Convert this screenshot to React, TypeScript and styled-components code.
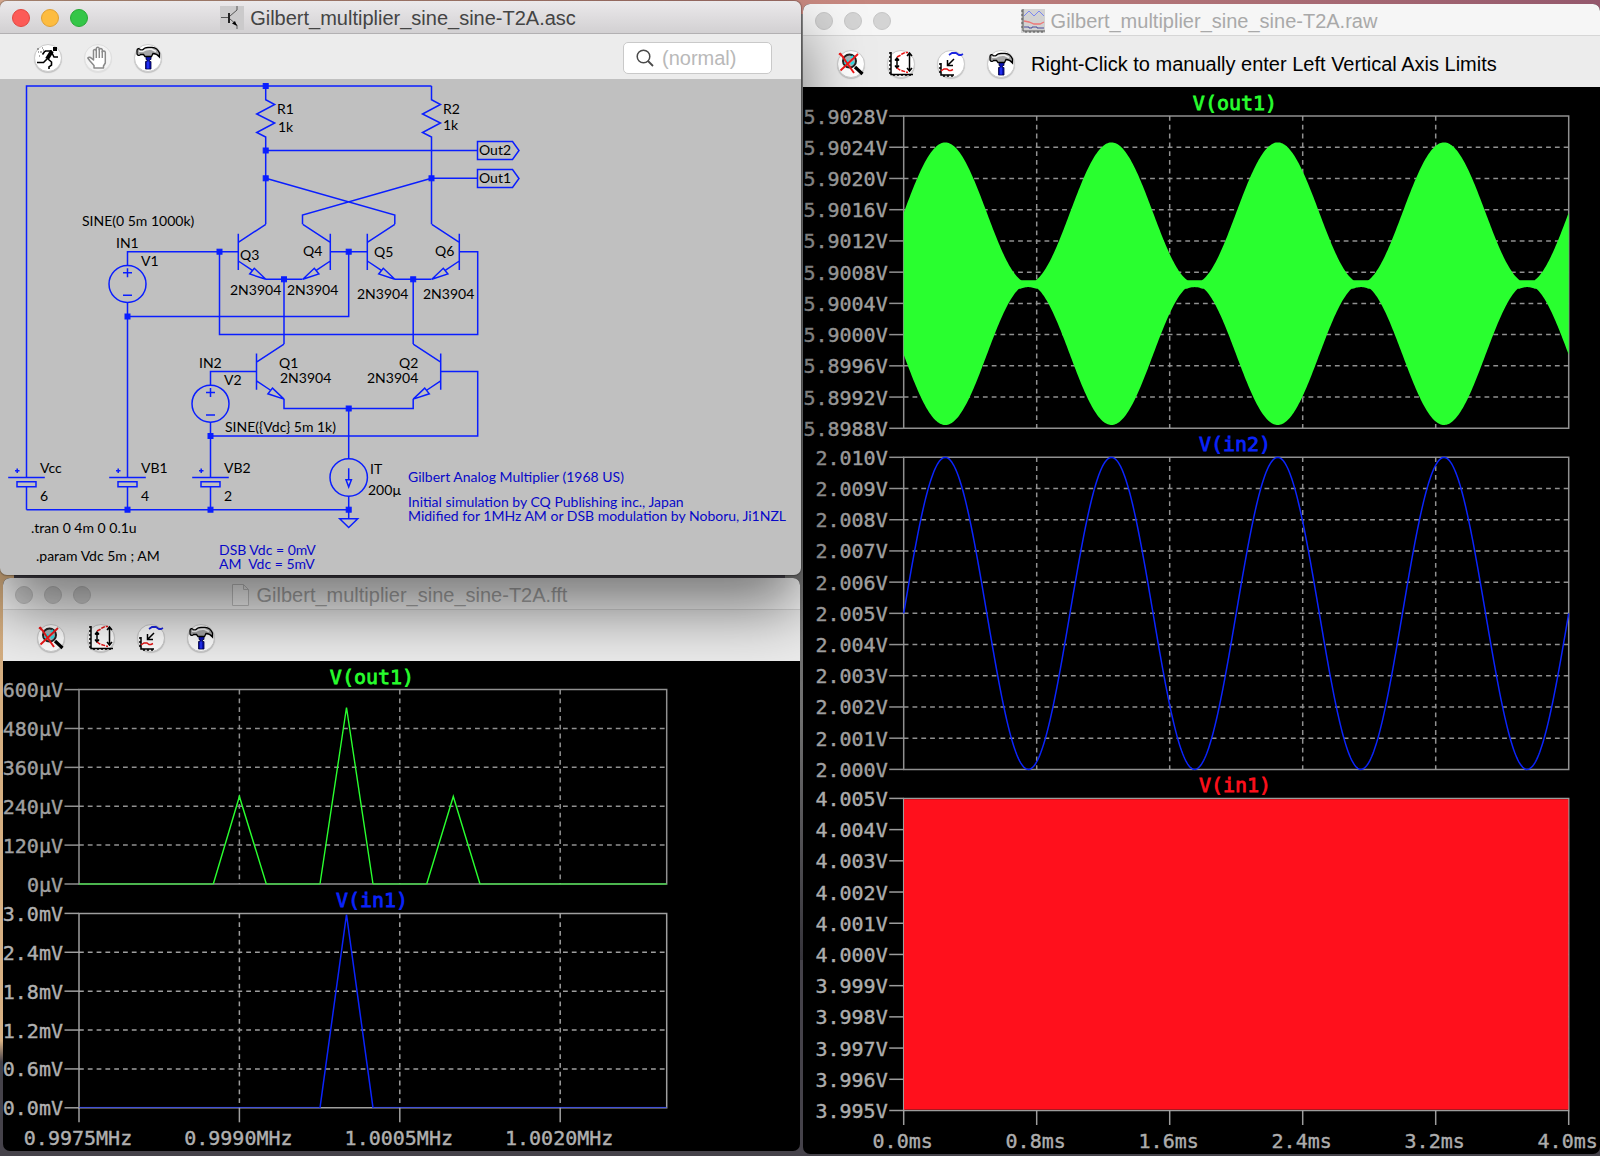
import React from "react";
import styled, { createGlobalStyle, css } from "styled-components";

const GlobalStyle = createGlobalStyle`
  *, *::before, *::after { box-sizing: border-box; }
  html, body { margin: 0; padding: 0; }
  body { font-family: "Liberation Sans", Arial, sans-serif; background: #35333a; }
`;

/* ---------- desktop and windows ---------- */

const Desktop = styled.main`
  min-height: 100vh;
  display: grid;
  grid-template-columns: 801fr 797fr;
  column-gap: 2px;
  align-items: start;
  padding-bottom: 2px;
  overflow: hidden;
  background:
    linear-gradient(90deg, #dcae94, #c98a80 50%, #94586c) top / 100% 14px no-repeat,
    linear-gradient(180deg, #cfa878, #d8b184 98%, #45414a) left top / 14px 1062px no-repeat,
    linear-gradient(180deg, #8c8c8c, #6f6f6f 75%, #35333a) center top / 30px 960px no-repeat,
    #45424a;
`;

const LeftColumn = styled.div`
  display: flex;
  flex-direction: column;
  gap: 3px;
  padding-top: 1px;
`;

const RightColumn = styled.div`
  padding-top: 4px;
`;

const Frame = styled.section<{ $active?: boolean; $inset?: boolean }>`
  overflow: hidden;
  border-radius: 7px;
  background: #000;
  ${(p) =>
    p.$active
      ? css`
          position: relative;
          z-index: 2;
          background: #c0c0c0;
          box-shadow: 0 0 1px 1px rgba(0, 0, 0, 0.25), 0 34px 64px rgba(0, 0, 0, 0.52);
        `
      : ""}
  ${(p) => (p.$inset ? "margin: 0 1px 0 3px;" : "")}
`;

const TitleBar = styled.header<{ $active?: boolean }>`
  height: ${(p) => (p.$active ? 33 : 32)}px;
  display: grid;
  grid-template-columns: 1fr auto 1fr;
  align-items: center;
  padding: 2px 11px 0 12px;
  color: ${(p) => (p.$active ? "#444" : "#a9a9a9")};
  background: ${(p) => (p.$active ? "linear-gradient(#ebe9eb, #d2d0d2)" : "#f6f6f6")};
  border-bottom: 1px solid ${(p) => (p.$active ? "#b2b0b2" : "#d6d6d6")};
`;

const Lights = styled.div`
  display: flex;
  gap: 11px;
`;

const Light = styled.button<{ $fill: string; $edge: string }>`
  width: 18px;
  height: 18px;
  padding: 0;
  border-radius: 50%;
  border: 1px solid ${(p) => p.$edge};
  background: ${(p) => p.$fill};
`;

const Title = styled.h1`
  display: flex;
  align-items: center;
  gap: 6px;
  margin: 0;
  padding-right: 6px;
  font-size: 20px;
  line-height: 24px;
  font-weight: 400;
  white-space: nowrap;
`;

const Toolbar = styled.div<{ $compact?: boolean }>`
  height: ${(p) => (p.$compact ? 45 : 51)}px;
  display: flex;
  align-items: center;
  gap: 22px;
  padding: ${(p) => (p.$compact ? 2 : 4)}px 29px 0 34px;
  background: #ececec;
`;

const ToolButton = styled.button<{ $dim?: boolean }>`
  flex: none;
  width: 28px;
  height: 28px;
  display: grid;
  place-items: center;
  padding: 0;
  border: 1px solid ${(p) => (p.$dim ? "#dedede" : "#cbcbcb")};
  border-radius: 50%;
  background: ${(p) => (p.$dim ? "#f4f4f4" : "#fff")};
  box-shadow: 0 1px 1px rgba(0, 0, 0, ${(p) => (p.$dim ? 0.06 : 0.18)});

  svg {
    flex: none;
    overflow: visible;
  }
`;

const Hint = styled.p`
  margin: 0 0 0 -6px;
  font-size: 20px;
  line-height: 24px;
  color: #000;
  white-space: nowrap;
`;

const SearchBox = styled.label`
  width: 149px;
  height: 32px;
  display: flex;
  align-items: center;
  gap: 8px;
  margin-left: auto;
  padding: 0 10px 0 12px;
  border: 1px solid #c9c9c9;
  border-radius: 5px;
  background: #fff;
`;

const SearchInput = styled.input`
  flex: 1;
  min-width: 0;
  padding: 0;
  border: 0;
  outline: 0;
  background: transparent;
  font: 20px/24px "Liberation Sans", Arial, sans-serif;
  &::placeholder {
    color: #b9b9b9;
    opacity: 1;
  }
`;

const Drawing = styled.svg`
  display: block;
  width: 100%;
  height: auto;
`;

/* ---------- icons ---------- */

const RunIcon = () => (
  <svg width="24" height="24" viewBox="0 0 24 24" fill="none" stroke="#000" strokeWidth="1.6">
    <rect x="17" y="1" width="4" height="4" fill="#000" stroke="none" />
    <path d="M16 5L11 13" strokeWidth="4" />
    <path d="M9 5l7 0M9 5L6.500 8.500M16 7l2 4h4M11 13l-3.500 3.500H1M12 13l3.500 3v3l-2.500 2v2" />
    <path d="M1 3h2M4 6h2M6 2h1M2 6h1M3 10h1M7 4h1" strokeWidth="1.200" stroke="#555" />
  </svg>
);

const HandIcon = () => (
  <svg width="22" height="24" viewBox="0 0 22 24" fill="#fff" stroke="#8a8a8a" strokeWidth="1.500" strokeLinejoin="round">
    <path d="M7 22v-2.500L3 15 .8 12c1-1.200 2.600-.8 3.500.2L6.500 14V4.500c.3-1.500 2.400-1.500 2.800 0V2.500c.4-1.600 2.500-1.600 3 0v1.200c.4-1.500 2.600-1.500 3 0V6c.5-1.400 2.800-1.200 3 .3V17l-1.800 3v2z" />
    <path d="M9.300 4v8M12.300 3v9M15.300 5v7" fill="none" />
  </svg>
);

const HammerIcon = () => (
  <svg width="24" height="24" viewBox="0 0 24 24">
    <path d="M10 10.500h5v3h-1.500v2h1.500V23H9.500v-7.500H11v-2h-1z" fill="#0a12b4" stroke="#000040" strokeWidth=".8" />
    <path d="M12 15.500v7" stroke="#2838ff" strokeWidth="1.600" />
    <path
      d="M1 4.500c0-2 2.500-2.500 3.500-.5h2C8 2 10 1.300 12 1.300h4c3.500.3 6.500 3 7.500 5.700V11c-2-2.500-4-3.500-6.500-3.500l-1.500 3H9L7.500 8.500H4.500C3.500 10 1.500 9.500 1 8z"
      fill="#a6a6a6"
      stroke="#000"
      strokeWidth="1.300"
    />
    <path d="M3 5.300h4C9 3.500 12 3 15.500 3.300L20 5.500" stroke="#efefef" strokeWidth="1.500" fill="none" />
  </svg>
);

const ZoomOffIcon = () => (
  <svg width="24" height="24" viewBox="0 0 24 24" fill="none">
    <circle cx="10.500" cy="9" r="6.500" fill="#a9b5b8" stroke="#222" strokeWidth="2" />
    <path d="M6 12l3-4M12 6l2-2M12 12l3-2" stroke="#25e0ea" strokeWidth="2.200" />
    <path d="M16 15l7.500 7" stroke="#000" strokeWidth="3.200" />
    <path d="M1 1l14 20M0 1.500l5 4M19 2L1.500 18.500" stroke="#f01818" strokeWidth="1.900" />
  </svg>
);

const FitIcon = () => (
  <svg width="26" height="26" viewBox="0 0 26 26" fill="none" stroke="#000" strokeWidth="1.500">
    <path d="M3 1v22.500h22" />
    <path d="M1 2h2M1 6h2M1 10h2M1 14h2M1 18h2M1 22h2M6 23v2M10 23v2M14 23v2M18 23v2M22 23v2" />
    <path d="M9 8v8M7 9.500L9 7l2 2.500M7 14.500L9 17l2-2.500M21.500 2v18M19 5l2.500-3L24 5M19 17l2.500 3L24 17" />
    <path d="M9 6l3-1.500 2-1.500 3-1.500h3M9 17l3 2 3 1 5 1.500" stroke="#e81616" strokeDasharray="4 1" />
  </svg>
);

const ZoomBackIcon = () => (
  <svg width="26" height="26" viewBox="0 0 26 26" fill="none" stroke="#000" strokeWidth="1.500">
    <path d="M3 12v12h13" />
    <path d="M1 13h2M1 17h2M1 21h2M6 24v2M10 24v2M14 24v2M16 8l-6 6M9.500 9v5.500H15" />
    <path d="M3 20l3-2h3l2 1.500h2l2-1" stroke="#e81616" />
    <path d="M11 4l3-2h4l3 2h2l2-1" stroke="#1c26e0" strokeWidth="1.800" />
  </svg>
);

const TransistorIcon = () => (
  <svg width="24" height="24" viewBox="0 0 24 24" fill="none" stroke="#555" strokeWidth="1">
    <rect width="24" height="24" fill="#cbcacb" stroke="none" />
    <path d="M1 11.500h7M10 10l7-6V0M10 13l7 6v4" />
    <path d="M9 7v10" stroke="#222" strokeWidth="2" />
    <path d="M17 20l-5-2.500 3-2.500z" fill="#000" stroke="none" />
  </svg>
);

const WaveformIcon = () => (
  <svg width="24" height="24" viewBox="0 0 24 24" fill="none" strokeWidth="1">
    <rect width="24" height="24" fill="#d2d2d2" />
    <path d="M2 0v22h22M0 2h2M0 6h2M0 10h2M0 14h2M0 18h2M5 22v2M9 22v2M13 22v2M17 22v2M21 22v2" stroke="#555" />
    <path d="M3 7l5-5 5 5 5-5 5 5" stroke="#7a86f0" />
    <path d="M3 12l5 1 5 2 6 0 4-2" stroke="#ee7777" strokeWidth="1.300" />
    <path d="M3 18h5v1h3v-1h5v1h7" stroke="#4a4a9a" />
  </svg>
);

const PageIcon = () => (
  <svg width="20" height="24" viewBox="0 0 20 24" fill="#fdfdfd" stroke="#c8c8c8" strokeWidth="1">
    <path d="M1.500 1.500h11l5 5v16h-16zM12.500 1.500v5h5" />
  </svg>
);

const SearchIcon = () => (
  <svg width="18" height="18" viewBox="0 0 18 18" fill="none" stroke="#4a4a4a" strokeWidth="1.500">
    <circle cx="7.500" cy="7.500" r="6.300" />
    <path d="M12 12l5 5" strokeWidth="1.800" />
  </svg>
);

/* ---------- window chrome ---------- */

const activeLights = [
  ["Close", "#fc5b57", "#e2463f"],
  ["Minimize", "#fdbc40", "#e0a033"],
  ["Zoom", "#34c648", "#27a935"],
];
const idleLights = [
  ["Close", "#d4d4d4", "#c6c6c6"],
  ["Minimize", "#d4d4d4", "#c6c6c6"],
  ["Zoom", "#d4d4d4", "#c6c6c6"],
];

type WindowProps = {
  title: string;
  icon: React.ReactNode;
  toolbar: React.ReactNode;
  active?: boolean;
  inset?: boolean;
  children: React.ReactNode;
};

const AppWindow = ({ title, icon, toolbar, active, inset, children }: WindowProps) => (
  <Frame $active={active} $inset={inset} aria-label={title}>
    <TitleBar $active={active}>
      <Lights>
        {(active ? activeLights : idleLights).map(([name, fill, edge]) => (
          <Light key={name} type="button" aria-label={name} $fill={fill} $edge={edge} />
        ))}
      </Lights>
      <Title>
        {icon}
        {title}
      </Title>
    </TitleBar>
    <Toolbar $compact={active}>{toolbar}</Toolbar>
    {children}
  </Frame>
);

const PlotTools = () => (
  <>
    <ToolButton type="button" aria-label="Zoom to fit"><ZoomOffIcon /></ToolButton>
    <ToolButton type="button" aria-label="Autorange"><FitIcon /></ToolButton>
    <ToolButton type="button" aria-label="Zoom back"><ZoomBackIcon /></ToolButton>
    <ToolButton type="button" aria-label="Control panel"><HammerIcon /></ToolButton>
  </>
);

/* ---------- schematic ---------- */

const BLUE = "#0a1eff";

const Wires = styled.g`
  fill: none;
  stroke: ${BLUE};
  stroke-width: 1.5;
`;

const Label = styled.text<{ $note?: boolean }>`
  font-family: Lato, "Open Sans", sans-serif;
  font-size: 14px;
  fill: ${(p) => (p.$note ? "#0808c8" : "#000")};
  white-space: pre;
`;

const Node = ({ x, y }: { x: number; y: number }) => (
  <rect x={x - 2.5} y={y - 2.5} width="5" height="5" fill={BLUE} stroke={BLUE} strokeWidth="1" />
);

/* NPN transistor; x is the bar, y the base, dir the side of collector and emitter */
const Npn = ({ x, y, dir }: { x: number; y: number; dir: 1 | -1 }) => (
  <g transform={`translate(${x} ${y}) scale(${dir} 1)`}>
    <path d="M0 -18V18.300M0 -9.400L27.500 -27.400M0 9.300L13.700 18.500M27.500 27.600L16 16.600L11.400 22.300Z" />
  </g>
);

const Resistor = ({ x }: { x: number }) => (
  <path d={`M${x} 86V99.700l9 4.800l-18 9.500l18 9l-18 9.500l9 4.500V178.300`} />
);

const Source = ({ x, y }: { x: number; y: number }) => (
  <path
    d={`M${x - 18.500} ${y}a18.500 18.500 0 1 0 37 0a18.500 18.500 0 1 0 -37 0M${x - 4.500} ${y - 11.300}h9M${x} ${y - 15.800}v9M${x - 4.500} ${y + 11.300}h9`}
  />
);

const Battery = ({ x }: { x: number }) => (
  <path d={`M${x - 18.300} 477.500h36.600M${x - 9.500} 481.700h19v5h-19zM${x} 486.700V509.700M${x - 11.500} 470.700h4.500M${x - 9.300} 468.500v4.500`} />
);

const nodes = [
  [265.7, 86], [265.7, 150.5], [265.7, 178.3], [431.5, 178.3], [219.5, 251.7], [348.7, 251.7],
  [284, 279.3], [413.2, 279.3], [127.5, 316.5], [348.7, 408.5], [210.5, 436],
  [127.5, 509.7], [210.5, 509.7], [348.7, 509.7],
];

const labels: [number, number, string][] = [
  [277, 114, "R1"], [278, 132, "1k"], [443, 114, "R2"], [443, 130, "1k"],
  [479, 155, "Out2"], [479, 183, "Out1"],
  [82, 226, "SINE(0 5m 1000k)"], [116, 248, "IN1"], [141, 266, "V1"],
  [240, 260, "Q3"], [303, 256, "Q4"], [374, 257, "Q5"], [435, 256, "Q6"],
  [230, 295, "2N3904"], [287, 295, "2N3904"], [357, 299, "2N3904"], [423, 299, "2N3904"],
  [199, 368, "IN2"], [224, 385, "V2"], [279, 368, "Q1"], [280, 383, "2N3904"],
  [399, 368, "Q2"], [367, 383, "2N3904"], [225, 432, "SINE({Vdc} 5m 1k)"],
  [40, 473, "Vcc"], [40, 501, "6"], [141, 473, "VB1"], [141, 501, "4"],
  [224, 473, "VB2"], [224, 501, "2"], [370, 474, "IT"], [368, 495, "200µ"],
  [31, 533, ".tran 0 4m 0 0.1u"], [36, 561, ".param Vdc 5m ; AM"],
];

const notes: [number, number, string][] = [
  [219, 555, "DSB Vdc = 0mV"], [219, 569, "AM  Vdc = 5mV"],
  [408, 482, "Gilbert Analog Multiplier (1968 US)"],
  [408, 507, "Initial simulation by CQ Publishing inc., Japan"],
  [408, 521, "Midified for 1MHz AM or DSB modulation by Noboru, Ji1NZL"],
];

const Schematic = () => (
  <Drawing viewBox="0 79 801 496" role="img" aria-label="Gilbert multiplier schematic">
    <Wires>
      <path d="M26.500 477.500V86H431.500M26.500 509.700H348.700" />
      <Resistor x={265.7} />
      <Resistor x={431.5} />
      <path d="M265.700 178.300V224.300M431.500 178.300V224.300M265.700 150.500H477.500M431.500 178.300H477.500" />
      <path d="M477.500 141.500h35l6.500 9l-6.500 9h-35zM477.500 169.500h35l6.500 9l-6.500 9h-35z" />
      <path d="M265.700 178.300L394.800 215V224.300M431.500 178.300L302.500 215V224.300" />
      <path d="M127.500 265.500V251.700H238.300M219.500 251.700V334.500H477.700V251.700H459.300" />
      <path d="M330.300 251.700H367.300M348.700 251.700V316.500H127.500M127.500 302.500V477.500" />
      <path d="M265.700 279.300H302.500M394.800 279.300H431.500M284 279.300V344M413.200 279.300V344" />
      <path d="M256.500 371.500H210.500V385M284 399V408.500H413.200V399M440.700 371.500H477.700V436H210.500" />
      <path d="M210.500 422.300V477.500M348.700 408.500V458.800M348.700 496.200V518.700M339.700 518.700h18l-9 8.800z" />
      <Npn x={238.3} y={251.7} dir={1} />
      <Npn x={330.3} y={251.7} dir={-1} />
      <Npn x={367.3} y={251.7} dir={1} />
      <Npn x={459.3} y={251.7} dir={-1} />
      <Npn x={256.5} y={371.5} dir={1} />
      <Npn x={440.7} y={371.5} dir={-1} />
      <Source x={127.5} y={284} />
      <Source x={210.5} y={403.7} />
      <circle cx="348.700" cy="477.500" r="18.700" />
      <path d="M348.700 468.300v11.500M346 479.800h5.400l-2.700 7z" />
      <Battery x={26.5} />
      <Battery x={127.5} />
      <Battery x={210.5} />
    </Wires>
    {nodes.map(([x, y]) => (
      <Node key={`${x}-${y}`} x={x} y={y} />
    ))}
    {labels.map(([x, y, text]) => (
      <Label key={`${x}-${y}`} x={x} y={y}>{text}</Label>
    ))}
    {notes.map(([x, y, text]) => (
      <Label key={text} x={x} y={y} $note>{text}</Label>
    ))}
  </Drawing>
);

/* ---------- plot panes ---------- */

const AxisText = styled.text<{ $tone: string }>`
  font-family: "DejaVu Sans Mono", monospace;
  font-size: 20px;
  fill: ${(p) => p.$tone};
  stroke: ${(p) => p.$tone};
  stroke-width: 0.4;
`;

const TraceName = styled(AxisText)`
  stroke-width: 0.8;
`;

type PaneProps = {
  left: number;
  right: number;
  top: number;
  height: number;
  xs: number[];
  ticks: string[];
  name: string;
  color: string;
  tone: string;
  children: React.ReactNode;
};

const Pane = ({ left, right, top, height, xs, ticks, name, color, tone, children }: PaneProps) => {
  const step = height / (ticks.length - 1);
  const bottom = top + height;
  const inner = ticks.slice(1, -1).map((_, i) => top + step * (i + 1));
  return (
    <g>
      <g stroke={tone} strokeWidth="1.500" strokeDasharray="4.800 4" fill="none" opacity="0.9">
        {inner.map((y) => <path key={y} d={`M${left} ${y}H${right}`} />)}
        {xs.map((x) => <path key={x} d={`M${x} ${top}V${bottom}`} />)}
      </g>
      <g stroke={tone} strokeWidth="1.500" fill="none" opacity="0.9">
        <path d={`M${left} ${top}H${right}V${bottom}H${left}Z`} />
        {ticks.map((t, i) => <path key={t} d={`M${left - 14.5} ${top + step * i}h14.500`} />)}
      </g>
      {children}
      {ticks.map((t, i) => (
        <AxisText key={t} $tone={tone} x={left - 16} y={Math.round(top + step * i + 7.5)} textAnchor="end">
          {t}
        </AxisText>
      ))}
      <TraceName $tone={color} x={Math.round((left + right) / 2 - 1)} y={Math.round(top - 6)} textAnchor="middle">
        {name}
      </TraceName>
    </g>
  );
};

const XAxis = ({ xs, y, names, tone }: { xs: number[]; y: number; names: string[]; tone: string }) => (
  <g>
    {xs.map((x, i) => (
      <g key={x}>
        <path d={`M${x} ${y}v14.500`} stroke={tone} strokeWidth="1.500" opacity="0.9" />
        <AxisText $tone={tone} x={x - 1} y={Math.round(y + 37)} textAnchor="middle">{names[i]}</AxisText>
      </g>
    ))}
  </g>
);

const GREEN = "#29ff2f";
const TRACE_BLUE = "#0b24fb";
const RED = "#ff101c";

const L = 903.7;
const R = 1568.7;
const PERIOD = (R - L) / 4;
const samples = Array.from({ length: 666 }, (_, i) => L + i);
const phase = (x: number) => Math.sin(((x - L) / PERIOD) * 2 * Math.PI);
const polyline = (f: (x: number) => number, xs: number[]) =>
  xs.map((x) => `${x.toFixed(1)},${f(x).toFixed(2)}`).join(" ");

/* near the null the carrier leaves a thin neck whose lower edge bows upward */
const amplitude = (x: number) => 71 + 70.3 * phase(x);
const upper = (x: number) => 283.7 - Math.max(3.4, amplitude(x));
const lower = (x: number) => 283.7 + Math.max(3.4 + 40 * (1 + phase(x)), amplitude(x));
const amPoints = polyline(upper, samples) + " " + polyline((x) => Math.min(lower(x), 283.7 + Math.max(5, amplitude(x))), [...samples].reverse());

const volts = (from: number, step: number, count: number, digits: number) =>
  Array.from({ length: count }, (_, i) => `${(from - step * i).toFixed(digits)}V`);

const rawXs = [0, 1, 2, 3, 4, 5].map((i) => L + 133 * i);

const TimePlot = () => (
  <Drawing viewBox="803 87 797 1067" role="img" aria-label="Transient waveforms">
    <Pane left={L} right={R} top={116} height={312.3} xs={rawXs.slice(1, 5)} ticks={volts(5.9028, 0.0004, 11, 4)}
      name="V(out1)" color={GREEN} tone="#a0a0a0">
      <polygon points={amPoints} fill={GREEN} />
    </Pane>
    <Pane left={L} right={R} top={457.3} height={312.1} xs={rawXs.slice(1, 5)} ticks={volts(2.01, 0.001, 11, 3)}
      name="V(in2)" color={TRACE_BLUE} tone="#a0a0a0">
      <polyline points={polyline((x) => 613.4 - 156 * phase(x), samples)} fill="none" stroke={TRACE_BLUE} strokeWidth="1.500" />
    </Pane>
    <Pane left={L} right={R} top={798.4} height={312.1} xs={[]} ticks={volts(4.005, 0.001, 11, 3)}
      name="V(in1)" color={RED} tone="#adadad">
      <rect x={L + 0.3} y="799.200" width={R - L - 0.6} height="310.400" fill={RED} />
    </Pane>
    <XAxis xs={rawXs} y={1110.5} tone="#adadad" names={["0.0ms", "0.8ms", "1.6ms", "2.4ms", "3.2ms", "4.0ms"]} />
  </Drawing>
);

const fftXs = [79, 239.4, 399.8, 560.2];

const FftPlot = () => (
  <Drawing viewBox="3 661 797 490" role="img" aria-label="Frequency spectrum">
    <Pane left={79} right={666.7} top={689.6} height={194.4} xs={fftXs.slice(1)}
      ticks={["600µV", "480µV", "360µV", "240µV", "120µV", "0µV"]} name="V(out1)" color={GREEN} tone="#a0a0a0">
      <g fill="none" stroke={GREEN} strokeWidth="1.400">
        <path d="M213.300 884L239.400 796.500L266.300 884M320 884L346.500 707.500L373 884M426.700 884L453.300 796.500L480 884" />
        <path d="M79 884H213.300M266.300 884H320M373 884H426.700M480 884H666.700" opacity="0.65" />
      </g>
    </Pane>
    <Pane left={79} right={666.7} top={913.4} height={194.4} xs={fftXs.slice(1)}
      ticks={["3.0mV", "2.4mV", "1.8mV", "1.2mV", "0.6mV", "0.0mV"]} name="V(in1)" color={TRACE_BLUE} tone="#b0b0b0">
      <g fill="none" stroke={TRACE_BLUE} strokeWidth="1.500">
        <path d="M320 1107.800L346.500 914.500L373 1107.800" />
        <path d="M79 1107.400H320M373 1107.400H666.700" strokeWidth="1" opacity="0.7" />
      </g>
    </Pane>
    <XAxis xs={fftXs} y={1107.8} tone="#b0b0b0" names={["0.9975MHz", "0.9990MHz", "1.0005MHz", "1.0020MHz"]} />
  </Drawing>
);

export default function App() {
  return (
    <>
      <GlobalStyle />
      <Desktop>
        <LeftColumn>
          <AppWindow
            active
            title="Gilbert_multiplier_sine_sine-T2A.asc"
            icon={<TransistorIcon />}
            toolbar={
              <>
                <ToolButton type="button" aria-label="Run"><RunIcon /></ToolButton>
                <ToolButton type="button" aria-label="Halt" $dim><HandIcon /></ToolButton>
                <ToolButton type="button" aria-label="Control panel"><HammerIcon /></ToolButton>
                <SearchBox>
                  <SearchIcon />
                  <SearchInput type="text" placeholder="(normal)" aria-label="Search" />
                </SearchBox>
              </>
            }
          >
            <Schematic />
          </AppWindow>
          <AppWindow inset title="Gilbert_multiplier_sine_sine-T2A.fft" icon={<PageIcon />} toolbar={<PlotTools />}>
            <FftPlot />
          </AppWindow>
        </LeftColumn>
        <RightColumn>
          <AppWindow
            title="Gilbert_multiplier_sine_sine-T2A.raw"
            icon={<WaveformIcon />}
            toolbar={
              <>
                <PlotTools />
                <Hint>Right-Click to manually enter Left Vertical Axis Limits</Hint>
              </>
            }
          >
            <TimePlot />
          </AppWindow>
        </RightColumn>
      </Desktop>
    </>
  );
}
